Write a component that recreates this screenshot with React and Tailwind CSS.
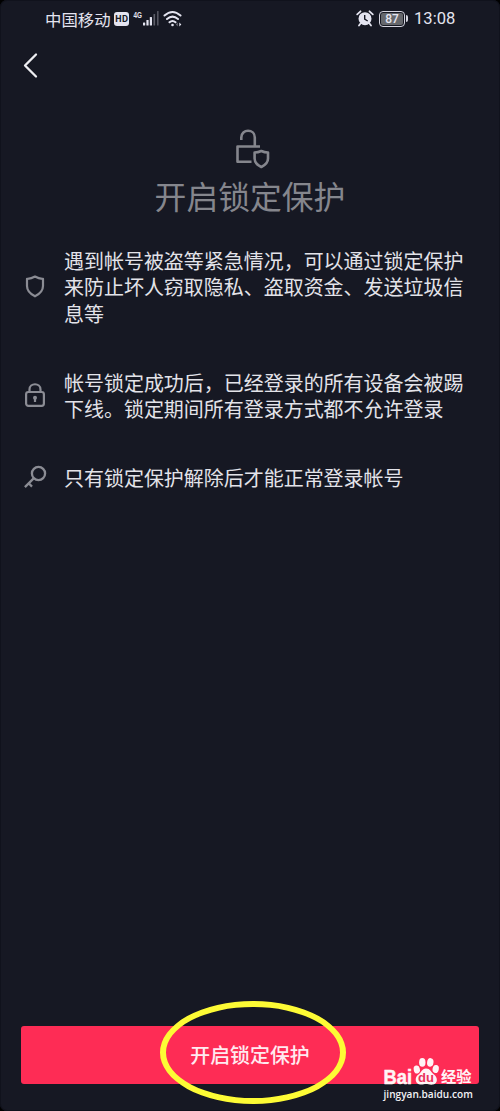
import React from 'react';

function StatusBar() {
  return (
    <header className="flex h-[34px] items-center pt-[3px] pr-[44px] pl-[45px] text-[#e4e4f0]">
      <span className="w-[66px] text-[16.4px] leading-6 whitespace-nowrap">中国移动</span>
      <span className="ml-[3px] flex h-[14px] w-[15px] items-center justify-center rounded-[3px] bg-[#e4e4f0] text-[9px] font-bold tracking-tight text-[#161823]">
        HD
      </span>
      <svg className="mt-[4px] ml-[4px] h-[14px] w-[10px] self-start overflow-visible" viewBox="0 0 10 14">
        <text x="0.500" y="10.500" textLength="8.500" lengthAdjust="spacingAndGlyphs" fill="currentColor" fontFamily="Liberation Sans" fontWeight="700" fontSize="9.500">4G</text>
      </svg>
      <svg className="h-[16px] w-[17px]" viewBox="0 0 17 16" fill="currentColor">
        <rect x="0" y="11.5" width="2.200" height="3" rx=".5" />
        <rect x="3.4" y="9" width="2.200" height="5.5" rx=".5" />
        <rect x="6.8" y="6" width="2.200" height="8.500" rx=".5" />
        <rect x="10.500" y="3" width="1.600" height="11.500" rx=".5" opacity=".35" />
        <rect x="14" y="0" width="1.600" height="14.500" rx=".5" opacity=".3" />
      </svg>
      <svg className="ml-[3px] h-[18px] w-[20px]" viewBox="0 0 20 18" fill="none" stroke="currentColor" strokeWidth="2" strokeLinecap="round">
        <path d="M1.500 5.500Q9.500-1.500 17.500 5.500M4 9Q9.500 4.300 15 9M6.500 12.300Q9.500 9.600 12.500 12.300" />
        <circle cx="9.500" cy="15" r="1.300" fill="currentColor" stroke="none" />
        <path d="M14.800 12.500v4l-2-2z" fill="currentColor" stroke="none" opacity=".4" />
        <path d="M16.300 12.500v4l2-2z" fill="currentColor" stroke="none" />
      </svg>
      <svg className="ml-auto h-[17px] w-[18px]" viewBox="0 0 18 17">
        <path d="M1.200 4.300L4.500 1.300M16.800 4.300L13.500 1.300M4.300 13.800L3 15.500M13.700 13.800L15 15.500" stroke="currentColor" strokeWidth="1.800" strokeLinecap="round" />
        <circle cx="9" cy="8.700" r="6.500" fill="currentColor" />
        <path d="M8.700 5v4.200l3 1.800" fill="none" stroke="#161823" strokeWidth="1.400" />
      </svg>
      <span className="ml-[5px] flex h-[16px] w-[26px] rounded-[4px] border-[1.5px] border-[#d4d4df] p-[1px]">
        <span className="flex w-full items-center justify-center rounded-[2px] bg-[#65676c] font-['Roboto',sans-serif] text-[12px] leading-none font-medium">87</span>
      </span>
      <span className="ml-[1px] h-[7px] w-[2px] rounded-r-sm bg-[#d4d4df]" />
      <time className="ml-[6px] w-[42px] font-['Roboto','Noto_Sans_CJK_SC',sans-serif] text-[16.600px] leading-6 whitespace-nowrap">13:08</time>
    </header>
  );
}

function ShieldIcon() {
  return (
    <svg className="h-[24px] w-[20px]" viewBox="0 0 20 24" fill="none" stroke="currentColor" strokeWidth="2.200" strokeLinejoin="round">
      <path d="M10 1.500Q14 4 18 3.800V11Q18 17.300 10 21.300Q2 17.300 2 11V3.800Q6 4 10 1.500Z" />
    </svg>
  );
}

function LockIcon() {
  return (
    <svg className="-mt-[2px] h-[26px] w-[20px]" viewBox="0 0 20 26" fill="none" stroke="currentColor" strokeWidth="2.200">
      <rect x="1.100" y="10" width="17.800" height="13.800" rx="2.300" />
      <path d="M4.500 10V7.500C4.500 .500 15.500 .500 15.500 7.500V10" />
      <circle cx="10" cy="15.800" r="2" fill="currentColor" stroke="none" />
      <path d="M10 16v4" />
    </svg>
  );
}

function KeyIcon() {
  return (
    <svg className="-mt-[3px] h-[24px] w-[24px]" viewBox="0 0 24 24" fill="none" stroke="currentColor" strokeWidth="2.300">
      <circle cx="15.500" cy="8.500" r="6.600" />
      <path d="M10.900 13.100L1.900 22.100M5.700 18.300L9 21.600" />
    </svg>
  );
}

function Notice({ icon, children }) {
  return (
    <li className="flex items-center">
      <span className="flex w-[69px] shrink-0 justify-center text-[#8b8c94]">{icon}</span>
      <p className="-ml-[5px] text-[19.98px] leading-[26.300px] whitespace-nowrap text-[#e3e3e9]">{children}</p>
    </li>
  );
}

function Watermark() {
  return (
    <div className="absolute top-[1054px] left-[383px] w-[94px] text-[#fff4f6]">
      <div className="flex h-[34px] items-end">
        <svg className="h-[34px] w-[56px] shrink-0 overflow-visible" viewBox="0 0 56 34">
          <text x="0.500" y="30" fill="currentColor" stroke="currentColor" strokeWidth=".5" textLength="28.500" lengthAdjust="spacingAndGlyphs" fontFamily="Liberation Sans" fontWeight="700" fontSize="19.500">Bai</text>
          <g fill="currentColor" transform="translate(30 2.500)">
            <ellipse cx="3.800" cy="13" rx="3.100" ry="4" transform="rotate(-12 3.800 13)" />
            <ellipse cx="9.300" cy="5.900" rx="3.200" ry="4.300" />
            <ellipse cx="17.300" cy="5.900" rx="3.200" ry="4.300" transform="rotate(8 17.300 5.900)" />
            <ellipse cx="22.700" cy="12.500" rx="3.100" ry="4" transform="rotate(12 22.700 12.500)" />
            <path d="M13 12C8.500 12 8.800 16 5.200 18.300C1.500 20.800 1.800 27.500 7 28C10 28.300 11 27.400 13 27.400C15 27.400 17 28.500 20 28C25 27.200 25 21 21 18C17.500 15.400 17.500 12 13 12Z" />
          </g>
          <text x="43" y="28" textAnchor="middle" fill="#e8335c" fontFamily="Liberation Sans" fontWeight="700" fontSize="13">du</text>
        </svg>
        <span className="mb-[1px] ml-[2px] text-[15.300px] leading-[23px] font-bold whitespace-nowrap">经验</span>
      </div>
      <p className="-mt-px ml-[0.500px] font-['Open_Sans',sans-serif] text-[10.100px] leading-[14px] font-semibold whitespace-nowrap text-[#f1f1f5]">jingyan.baidu.com</p>
    </div>
  );
}

export default function App() {
  return (
    <div className="h-[1111px] w-[500px] overflow-hidden bg-black font-['Noto_Sans_CJK_SC',sans-serif]">
      <main className="relative flex h-full flex-col overflow-hidden rounded-[7px] bg-[#161823] shadow-[inset_0_0_0_1px_#10121c]">
        <StatusBar />
        <nav className="pt-[18px] pl-[21px]">
          <button className="block text-[#eeeef2]" aria-label="返回">
            <svg className="h-[28px] w-[18px]" viewBox="0 0 18 28" fill="none" stroke="currentColor" strokeWidth="2.300" strokeLinecap="round" strokeLinejoin="round">
              <path d="M15 2.500L4 13.500L15 24.500" />
            </svg>
          </button>
        </nav>

        <section className="mt-[48px] flex flex-col items-center text-[#85868d]">
          <svg className="ml-[6px] h-[42px] w-[36px]" viewBox="0 0 36 42" fill="none" stroke="currentColor" strokeWidth="2.600">
            <path d="M6.300 12V9.500C6.300 .500 19.800 .500 19.800 9.500V18.500" />
            <path d="M25 18.500H2.500V33.700H16.500" strokeLinejoin="round" />
            <path d="M26.300 23Q29.500 24.500 33 24.500V30.500Q33 35.700 26.300 39Q19.600 35.700 19.600 30.500V24.500Q23 24.500 26.300 23Z" strokeLinejoin="round" />
          </svg>
          <h1 className="-mt-[2px] text-[31.800px] leading-[54px] font-normal">开启锁定保护</h1>
        </section>

        <ul className="mt-[26px] flex flex-col gap-[43px]">
          <Notice icon={<ShieldIcon />}>
            遇到帐号被盗等紧急情况，可以通过锁定保护<br />来防止坏人窃取隐私、盗取资金、发送垃圾信<br />息等
          </Notice>
          <Notice icon={<LockIcon />}>
            帐号锁定成功后，已经登录的所有设备会被踢<br />下线。锁定期间所有登录方式都不允许登录
          </Notice>
          <Notice icon={<KeyIcon />}>只有锁定保护解除后才能正常登录帐号</Notice>
        </ul>

        <button className="mx-[21px] mt-auto mb-[27px] h-[58px] shrink-0 rounded-[3px] bg-[#fe2c55] text-[19.900px] font-medium text-[#ffeaf0]">
          开启锁定保护
        </button>

        <div className="absolute top-[1001px] left-[160px] h-[103px] w-[186px] rounded-[50%] border-[6px] border-[#fdfb35]" />
        <Watermark />
      </main>
    </div>
  );
}
